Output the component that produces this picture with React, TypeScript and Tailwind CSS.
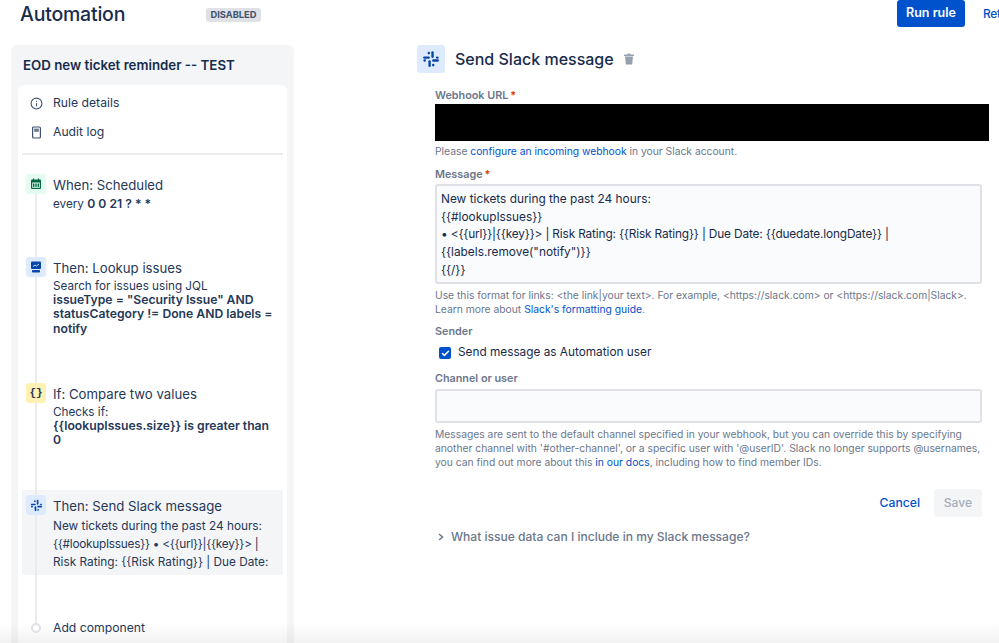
import React from 'react';
import { Check, Info } from 'lucide-react';

const SlackIcon = ({ size }: { size: number }) => (
  <svg width={size} height={size} viewBox="0 0 16 16" fill="#0747a6">
    <rect x="1" y="5.7" width="6" height="2.1" rx="1.05" />
    <rect x="5" y="1.5" width="2.1" height="2.4" rx="1" />
    <rect x="8.3" y="1" width="2.1" height="6" rx="1.05" />
    <rect x="12.4" y="5.7" width="2.4" height="2.1" rx="1" />
    <rect x="9" y="8.3" width="6" height="2.1" rx="1.05" />
    <rect x="8.9" y="12.2" width="2.1" height="2.4" rx="1" />
    <rect x="5.7" y="9" width="2.1" height="6" rx="1.05" />
    <rect x="1.2" y="8.3" width="2.4" height="2.1" rx="1" />
  </svg>
);

const CalendarIcon = () => (
  <svg width="12" height="12" viewBox="0 0 12 12">
    <rect x="1" y="1.5" width="10" height="9.5" rx="1" fill="#006644" />
    <rect x="2.2" y="4.5" width="7.6" height="5.3" fill="#e3fcef" />
    <rect x="3" y="5.5" width="1.4" height="3.4" fill="#006644" />
    <rect x="5.3" y="5.5" width="1.4" height="3.4" fill="#006644" />
    <rect x="7.6" y="5.5" width="1.4" height="3.4" fill="#006644" />
    <rect x="3" y="0.5" width="1" height="2" fill="#006644" />
    <rect x="8" y="0.5" width="1" height="2" fill="#006644" />
  </svg>
);

const LookupIcon = () => (
  <svg width="12" height="12" viewBox="0 0 12 12">
    <rect x="1" y="0.5" width="10" height="7.5" rx="1" fill="#0747a6" />
    <path d="M3 5.5 L5 4 L6.5 5 L9 3" stroke="#deebff" strokeWidth="0.9" fill="none" />
    <rect x="2" y="9" width="8" height="2.5" rx="0.8" fill="#0747a6" />
  </svg>
);

const AuditIcon = () => (
  <svg width="13" height="13" viewBox="0 0 13 13" className="mr-[10px]">
    <rect x="2.6" y="1" width="7.8" height="11" rx="1" fill="none" stroke="#42526e" strokeWidth="1.2" />
    <rect x="4.2" y="2.6" width="4.6" height="3.2" fill="#6b778c" />
  </svg>
);

const TrashIcon = () => (
  <svg width="12" height="12" viewBox="0 0 12 12" className="ml-[9px]" fill="#97a0af">
    <rect x="1" y="1.4" width="10" height="1.6" rx="0.5" />
    <rect x="4.4" y="0.4" width="3.2" height="1.4" rx="0.4" />
    <path d="M2 3.6 H10 L9.2 11 a0.8 0.8 0 0 1 -0.8 0.6 H3.6 a0.8 0.8 0 0 1 -0.8 -0.6 Z" />
  </svg>
);

const Step = ({ icon, tint, title, children, className }: { icon: React.ReactNode; tint: string; title: string; children: React.ReactNode; className: string }) => (
  <div className={`flex ${className}`}>
    <div className={`w-5 h-5 rounded-[3px] flex items-center justify-center shrink-0 relative z-10 ${tint}`}>{icon}</div>
    <div className="ml-[7px] min-w-0">
      <div className="text-[13.2px] leading-[22px] text-[#253858]">{title}</div>
      {children}
    </div>
  </div>
);

export default function App() {
  return (
    <div className="relative w-[999px] h-[643px] overflow-hidden bg-white font-['Inter',sans-serif] text-[#172b4d]">
      <div className="flex h-[45px]">
        <h1 className="ml-5 mt-[-1px] w-[112px] text-[19.5px] leading-[30px] font-medium text-[#172b4d] tracking-[-0.2px]">Automation</h1>
        <span className="ml-[74px] mt-2 h-3.5 w-[55px] text-center rounded-[3px] bg-[#dfe1e6] text-[9.3px] leading-[14px] font-bold text-[#42526e]">DISABLED</span>
        <button className="ml-auto h-[27px] w-[68px] rounded-[3px] bg-[#0052cc] text-white text-[12.5px] font-semibold">Run rule</button>
        <span className="ml-[18px] w-4 overflow-hidden text-[12px] leading-[27px] font-medium tracking-tight text-[#0052cc]">Ret</span>
      </div>

      <div className="flex">
        <aside className="ml-[11px] w-[283px] h-[598px] rounded-t-[6px] bg-[#f4f5f7] px-[7px]">
          <div className="h-10 pl-[5px] pt-[10px] text-[13.3px] leading-[20px] font-semibold text-[#172b4d]">EOD new ticket reminder -- TEST</div>
          <div className="relative h-[558px] rounded-t-[6px] bg-white px-1 pt-[4px]">
            <div className="absolute left-[17px] top-[105px] bottom-[15px] w-0.5 bg-[#ebecf0]" />
            <div className="flex items-center h-[29px] pl-2 text-[12.2px] text-[#253858]">
              <Info size={13} className="text-[#42526e] mr-[10px]" />Rule details
            </div>
            <div className="flex items-center h-[29px] pl-2 text-[12.2px] text-[#253858]">
              <AuditIcon />Audit log
            </div>
            <div className="h-0.5 bg-[#ebecf0] mt-[6px]" />

            <Step className="pl-1 mt-[19px] h-[83px]" tint="bg-[#e3fcef]" icon={<CalendarIcon />} title="When: Scheduled">
              <p className="text-[11.7px] leading-[14px] mt-px text-[#253858]">every <b className="font-semibold text-[12.2px]">0 0 21 ? * *</b></p>
            </Step>
            <Step className="pl-1 h-[126px]" tint="bg-[#deebff]" icon={<LookupIcon />} title="Then: Lookup issues">
              <p className="w-[224px] text-[11.7px] leading-[14.2px] text-[#253858]">Search for issues using JQL<br /><b className="font-semibold text-[12.2px]">issueType = "Security Issue" AND statusCategory != Done AND labels = notify</b></p>
            </Step>
            <Step className="pl-1 h-[107px]" tint="bg-[#fff0b3]" icon={<span className="text-[11px] font-bold leading-none text-[#253858] font-['Liberation_Mono',monospace]">{'{}'}</span>} title="If: Compare two values">
              <p className="w-[224px] text-[11.7px] leading-[14.2px] text-[#253858]">Checks if:<br /><b className="font-semibold text-[12.2px]">{'{{lookupIssues.size}} is greater than 0'}</b></p>
            </Step>
            <div className="h-[85px] rounded-[3px] bg-[#f4f5f7] pl-1 pt-[5px]">
              <Step className="" tint="bg-[#deebff]" icon={<SlackIcon size={13} />} title="Then: Send Slack message">
                <p className="text-[11.8px] leading-[18px] text-[#253858]">New tickets during the past 24 hours:<br /><span className="tracking-[-0.25px]">{'{{#lookupIssues}} • <{{url}}|{{key}}> |'}</span><br />{'Risk Rating: {{Risk Rating}} | Due Date:'}</p>
              </Step>
            </div>
            <div className="flex items-center mt-[43px] h-5 pl-[9px] text-[12.2px] text-[#253858]">
              <span className="relative z-10 w-2.5 h-2.5 rounded-full border-2 border-[#dfe1e6] bg-white mr-3" />Add component
            </div>
          </div>
        </aside>

        <main className="ml-[123px] w-[572px]">
          <div className="flex items-center">
            <div className="w-7 h-7 rounded-[3px] bg-[#deebff] flex items-center justify-center"><SlackIcon size={18} /></div>
            <h2 className="ml-[10px] text-[16px] leading-7 font-medium text-[#172b4d]">Send Slack message</h2>
            <TrashIcon />
          </div>
          <div className="ml-[18px] w-[547px]">
            <div className="mt-[14px] h-4 text-[10.8px] leading-[18px] font-semibold text-[#6b778c]">Webhook URL<span className="ml-0.5 text-[#de350b]">*</span></div>
            <div className="mt-px h-[37px] w-[554px] bg-black" />
            <p className="mt-[3px] text-[10.3px] leading-[14px] text-[#6b778c]">Please <span className="text-[#0052cc]">configure an incoming webhook</span> in your Slack account.</p>
            <div className="mt-[8px] h-4 text-[10.8px] leading-[18px] font-semibold text-[#6b778c]">Message<span className="ml-0.5 text-[#de350b]">*</span></div>
            <div className="mt-[2px] h-[100px] rounded-[3px] border-2 border-[#dfe1e6] bg-[#fafbfc] px-[4px] pt-[5px] text-[11.85px] leading-[17.7px] text-[#172b4d]">
              New tickets during the past 24 hours:<br />{'{{#lookupIssues}}'}<br /><span className="tracking-[-0.15px]">{'• <{{url}}|{{key}}> | Risk Rating: {{Risk Rating}} | Due Date: {{duedate.longDate}} |'}</span><br />{'{{labels.remove("notify")}}'}<br />{'{{/}}'}
            </div>
            <p className="mt-[4px] text-[10.3px] leading-[14px] text-[#6b778c]">{'Use this format for links: <the link|your text>. For example, <https://slack.com> or <https://slack.com|Slack>.'}<br />Learn more about <span className="text-[#0052cc]">Slack's formatting guide</span>.</p>
            <div className="mt-[7px] h-4 text-[10.8px] leading-[18px] font-semibold text-[#6b778c]">Sender</div>
            <label className="flex items-center mt-[4px] h-5 pl-[4px] text-[11.8px] text-[#172b4d]">
              <span className="w-3 h-3 rounded-[2px] bg-[#0052cc] flex items-center justify-center mr-[7px]"><Check size={9} strokeWidth={4} className="text-white" /></span>Send message as Automation user
            </label>
            <div className="mt-[7px] h-4 text-[10.8px] leading-[18px] font-semibold text-[#6b778c]">Channel or user</div>
            <div className="mt-[3px] h-[34px] rounded-[3px] border-2 border-[#dfe1e6] bg-[#fafbfc]" />
            <p className="mt-[4px] text-[10.3px] leading-[14px] text-[#6b778c]">Messages are sent to the default channel specified in your webhook, but you can override this by specifying another channel with '#other-channel', or a specific user with '@userID'. Slack no longer supports @usernames, you can find out more about this <span className="text-[#0052cc]">in our docs</span>, including how to find member IDs.</p>
            <div className="flex items-center justify-end mt-[20px]">
              <span className="text-[12.2px] font-medium text-[#0052cc] mr-[14px]">Cancel</span>
              <button className="w-12 h-[28px] rounded-[3px] bg-[#f4f5f7] text-[12.2px] font-medium text-[#a5adba]">Save</button>
            </div>
            <div className="flex items-center mt-[11px] pl-[3px] text-[12.05px] leading-[18px] font-medium text-[#6b778c]">
              <svg width="6" height="8" viewBox="0 0 6 8" className="mr-[7px]"><path d="M1 1 L4.5 4 L1 7" fill="none" stroke="#6b778c" strokeWidth="1.5" /></svg>
              What issue data can I include in my Slack message?
            </div>
          </div>
        </main>
      </div>
      <div className="absolute inset-x-0 bottom-0 h-[20px] bg-gradient-to-b from-transparent to-[#0000000d]" />
    </div>
  );
}
